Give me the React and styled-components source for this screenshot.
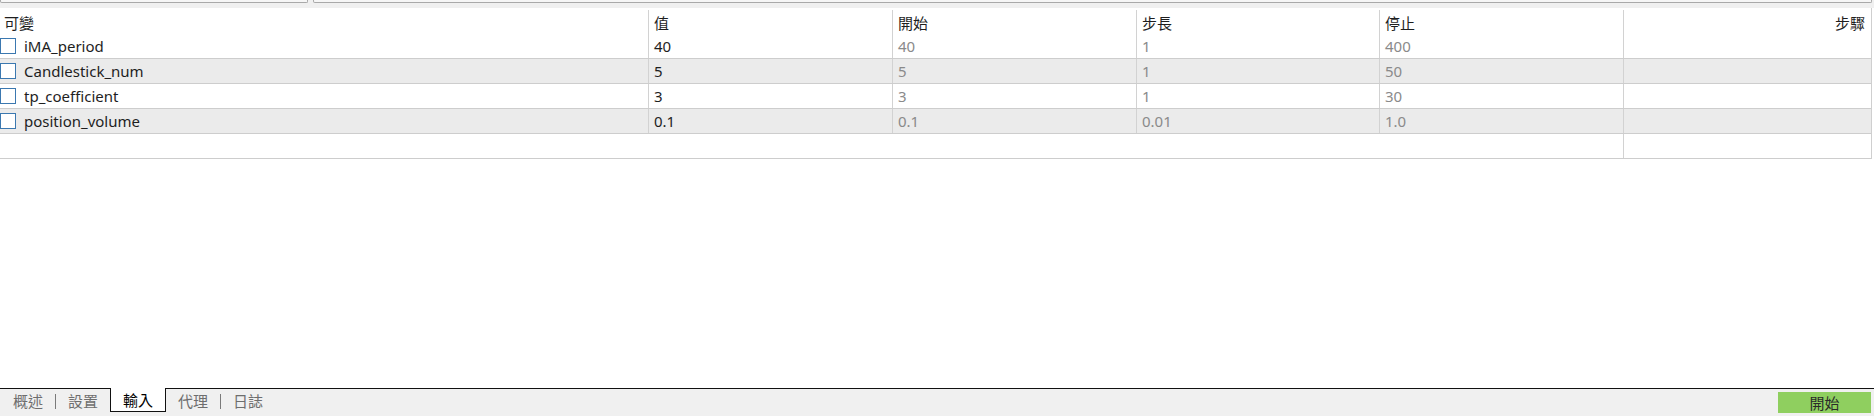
import React from "react";
import styled, { createGlobalStyle } from "styled-components";

const Global = createGlobalStyle`
  html, body { margin: 0; padding: 0; background: #ffffff; }
  body {
    font-family: "Noto Sans", "Noto Sans CJK TC", sans-serif;
    font-size: 15px;
    color: #1e1e1e;
  }
  * { box-sizing: border-box; }
`;

const Page = styled.div`
  height: 416px;
  display: flex;
  flex-direction: column;
  background: #ffffff;
`;

const TopStrip = styled.div`
  height: 8px;
  background: #f0f0f0;
  display: flex;
  gap: 5px;
  padding-right: 2px;
`;

const Pane = styled.div`
  height: 3px;
  width: ${(p) => (p.$w ? `${p.$w}px` : "auto")};
  flex: ${(p) => (p.$w ? "none" : "1")};
  border: 1px solid #a9a9a9;
  border-top: none;
  border-radius: 0 0 2px 2px;
  background: #f6f6f6;
`;

const COLS = "648px 244px 244px 243px 244px 1fr";

const Table = styled.div`
  width: 1872px;
  border-right: 1px solid #cfcfcf;
  display: flex;
  flex-direction: column;
`;

const Row = styled.div`
  display: grid;
  grid-template-columns: ${COLS};
  height: ${(p) => (p.$head ? "26px" : "25px")};
  padding-top: ${(p) => (p.$head ? "2px" : "0")};
  background: ${(p) => (p.$alt ? "#ebebeb" : "#ffffff")};
  border-bottom: ${(p) => (p.$line ? "1px solid #cdcdcd" : "none")};
`;

const EmptyRow = styled.div`
  display: grid;
  grid-template-columns: 1623px 1fr;
  height: 25px;
  border-bottom: 1px solid #cdcdcd;
`;

const Cell = styled.div`
  display: flex;
  align-items: center;
  gap: 8px;
  padding: 0 ${(p) => (p.$right ? "6px" : "0")} 0 ${(p) => (p.$first ? "0" : "5px")};
  justify-content: ${(p) => (p.$right ? "flex-end" : "flex-start")};
  border-left: ${(p) => (p.$first ? "none" : "1px solid #d2d2d2")};
  color: ${(p) => (p.$muted ? "#8a8a8a" : "#1e1e1e")};
  white-space: nowrap;
  overflow: hidden;
`;

const HeadCell = styled(Cell)`
  padding-left: ${(p) => (p.$first ? "4px" : "5px")};
  color: #1e1e1e;
`;

const Check = styled.span`
  width: 16px;
  height: 16px;
  margin-left: 0;
  border: 1px solid #3b78b0;
  background: #ffffff;
  flex: none;
`;

const Space = styled.div`
  flex: 1;
  background: #ffffff;
`;

const TabBar = styled.div`
  height: 28px;
  border-top: 1px solid #111111;
  background: #f0f0f0;
  display: flex;
  align-items: flex-start;
  padding-left: 1px;
  padding-right: 3px;
`;

const Tab = styled.div`
  height: ${(p) => (p.$active ? "24px" : "23px")};
  margin-top: ${(p) => (p.$active ? "-1px" : "0")};
  padding: 0 12px;
  display: flex;
  align-items: center;
  font-size: 15px;
  color: ${(p) => (p.$active ? "#000000" : "#6e6e6e")};
  background: ${(p) => (p.$active ? "#ffffff" : "transparent")};
  border: ${(p) => (p.$active ? "1px solid #111111" : "none")};
  border-top: none;
`;

const Sep = styled.span`
  width: 1px;
  height: 15px;
  margin-top: 5px;
  background: #7a7a7a;
`;

const Grow = styled.div`
  flex: 1;
`;

const StartButton = styled.button`
  margin-top: 3px;
  width: 93px;
  height: 21px;
  border: none;
  padding: 0;
  background: #8fcf5f;
  color: #2a2a2a;
  font-family: "Noto Sans CJK TC", sans-serif;
  font-size: 15px;
  line-height: 21px;
`;

const headers = ["可變", "值", "開始", "步長", "停止", "步驟"];

const rows = [
  { name: "iMA_period", value: "40", start: "40", step: "1", stop: "400" },
  { name: "Candlestick_num", value: "5", start: "5", step: "1", stop: "50" },
  { name: "tp_coefficient", value: "3", start: "3", step: "1", stop: "30" },
  { name: "position_volume", value: "0.1", start: "0.1", step: "0.01", stop: "1.0" },
];

export default function App() {
  return (
    <Page>
      <Global />
      <TopStrip>
        <Pane $w={308} />
        <Pane />
      </TopStrip>
      <Table>
        <Row $head>
          {headers.map((h, i) => (
            <HeadCell key={h} $first={i === 0} $right={i === 5}>
              {h}
            </HeadCell>
          ))}
        </Row>
        {rows.map((r, i) => (
          <Row key={r.name} $alt={i % 2 === 1} $line>
            <Cell $first>
              <Check />
              {r.name}
            </Cell>
            <Cell>{r.value}</Cell>
            <Cell $muted>{r.start}</Cell>
            <Cell $muted>{r.step}</Cell>
            <Cell $muted>{r.stop}</Cell>
            <Cell />
          </Row>
        ))}
        <EmptyRow>
          <Cell $first />
          <Cell />
        </EmptyRow>
      </Table>
      <Space />
      <TabBar>
        <Tab>概述</Tab>
        <Sep />
        <Tab>設置</Tab>
        <Tab $active>輸入</Tab>
        <Tab>代理</Tab>
        <Sep />
        <Tab>日誌</Tab>
        <Grow />
        <StartButton>開始</StartButton>
      </TabBar>
    </Page>
  );
}
